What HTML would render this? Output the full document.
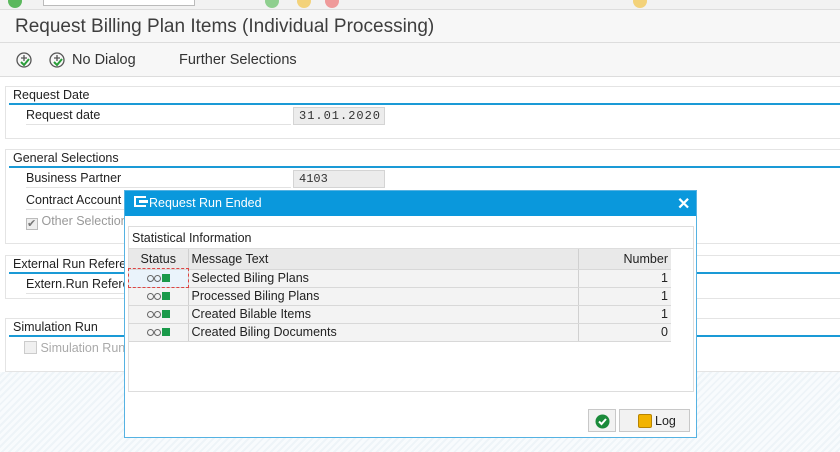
<!DOCTYPE html>
<html><head><meta charset="utf-8"><style>
*{margin:0;padding:0;box-sizing:border-box}
body{width:840px;height:452px;overflow:hidden;position:relative;font-family:"Liberation Sans",Arial,sans-serif;color:#222;background:repeating-linear-gradient(135deg,#eef4f8 0 2px,#f8fbfd 2px 5px)}
.abs{position:absolute}
.top{left:0;top:0;width:840px;height:10px;background:#f2f2f2;border-bottom:1px solid #ddd}
.title{left:0;top:10px;width:840px;height:33px;background:#f7f7f7;border-bottom:1px solid #ddd;font-size:19px;color:#3e3e3e;padding:6px 0 0 15px}
.tb{left:0;top:43px;width:840px;height:34px;background:#f7f7f7;border-bottom:1px solid #ddd;font-size:14.5px;color:#333}
.main{left:0;top:77px;width:840px;height:295px;background:#fff}
.sec{left:5px;width:840px;border:1px solid #e4e4e4;border-right:none;background:#fff}
.sh{position:absolute;left:7px;font-size:12.5px;color:#222}
.sl{position:absolute;left:3px;right:0;height:2px;background:#1a9ad6}
.lbl{position:absolute;left:20px;font-size:12.5px;color:#222;width:265px;height:18px;border-bottom:1px solid #e2e2e2;padding-top:1px}
.inp{position:absolute;left:287px;width:92px;height:18px;background:#ececec;border:1px solid #d4d4d4;font-family:"Liberation Mono",monospace;font-size:12px;padding:1px 0 0 5px;color:#333}
.dlg{left:124px;top:190px;width:573px;height:248px;background:#fff;border:1px solid #55b2e2}
.dt{left:0;top:0;width:571px;height:25px;background:#0a98dc;color:#fff;font-size:12.5px}
table{border-collapse:collapse;font-size:12.5px}
td{height:18px;border-bottom:1px solid #d8d8d8;padding:0 3px}
.c{display:inline-block;width:7px;height:7px;border:1.5px solid #666;border-radius:50%;margin-right:0}
.g{display:inline-block;width:8px;height:8px;background:#1a9a4a;margin-left:1px}
</style></head><body>
<div class="abs top">
<div class="abs" style="left:8px;top:-6px;width:14px;height:14px;border-radius:7px;background:#5bb85d"></div>
<div class="abs" style="left:43px;top:-2px;width:152px;height:8px;border:1px solid #bbb;background:#fff"></div>
<div class="abs" style="left:265px;top:-6px;width:14px;height:14px;border-radius:7px;background:#8fcf8f"></div>
<div class="abs" style="left:297px;top:-6px;width:14px;height:14px;border-radius:7px;background:#f3d27a"></div>
<div class="abs" style="left:325px;top:-6px;width:14px;height:14px;border-radius:7px;background:#ef9a9a"></div>
<div class="abs" style="left:633px;top:-6px;width:14px;height:14px;border-radius:7px;background:#f3d27a"></div>
</div>
<div class="abs title">Request Billing Plan Items (Individual Processing)</div>
<div class="abs tb">
<svg class="abs" style="left:15px;top:8px" width="18" height="18" viewBox="0 0 18 18"><circle cx="9" cy="9" r="7" fill="none" stroke="#555" stroke-width="1.3"/><path d="M9 4v6M6 7h6" stroke="#555" stroke-width="1.3"/><path d="M6 11l3 3 5-6" stroke="#2a9d3a" stroke-width="2" fill="none"/></svg>
<svg class="abs" style="left:48px;top:8px" width="18" height="18" viewBox="0 0 18 18"><circle cx="9" cy="9" r="7" fill="none" stroke="#555" stroke-width="1.3"/><path d="M9 4v6M6 7h6" stroke="#555" stroke-width="1.3"/><path d="M6 11l3 3 5-6" stroke="#2a9d3a" stroke-width="2" fill="none"/></svg>
<span class="abs" style="left:72px;top:9px">No Dialog</span>
<span class="abs" style="left:179px;top:9px">Further Selections</span>
</div>
<div class="abs main"></div>
<div class="abs sec" style="top:86px;height:53px"><div class="sh" style="top:1px">Request Date</div><div class="sl" style="top:16px"></div>
<div class="lbl" style="top:20px">Request date</div><div class="inp" style="top:20px;letter-spacing:1px">31.01.2020</div></div>
<div class="abs sec" style="top:149px;height:95px"><div class="sh" style="top:1px">General Selections</div><div class="sl" style="top:16px"></div>
<div class="lbl" style="top:20px">Business Partner</div><div class="inp" style="top:20px">4103</div>
<div class="lbl" style="top:42px">Contract Account</div>
<div class="abs" style="left:20px;top:64px;font-size:12.5px;color:#999"><span style="display:inline-block;width:12px;height:12px;border:1px solid #bbb;background:#eee;font-size:11px;line-height:10px;color:#777;vertical-align:-2px">✔</span> Other Selections</div></div>
<div class="abs sec" style="top:255px;height:44px"><div class="sh" style="top:1px">External Run Reference</div><div class="sl" style="top:16px"></div>
<div class="lbl" style="top:20px">Extern.Run Reference</div></div>
<div class="abs sec" style="top:318px;height:54px"><div class="sh" style="top:1px">Simulation Run</div><div class="sl" style="top:16px"></div>
<div class="abs" style="left:18px;top:22px;font-size:12.5px;color:#aaa"><span style="display:inline-block;width:13px;height:13px;border:1px solid #ccc;background:#f0f0f0;vertical-align:-2px"></span> Simulation Run</div></div>

<div class="abs dlg">
<div class="abs dt"><span class="abs" style="left:9px;top:5px;width:12px;height:11px;border:2px solid #fff;border-right:none"></span><span class="abs" style="left:14px;top:9px;width:9px;height:3px;background:#fff"></span><span class="abs" style="left:24px;top:5px">Request Run Ended</span><span class="abs" style="left:552px;top:3px;font-size:16px;font-weight:bold">✕</span></div>
<div class="abs" style="left:3px;top:35px;width:566px;height:166px;border:1px solid #ddd;background:#fff">
<div class="abs" style="left:0;top:0;width:564px;height:22px;border-bottom:1px solid #ddd;font-size:12.5px;padding:4px 0 0 3px">Statistical Information</div>
<table class="abs" style="left:0;top:22px;width:542px">
<tr style="background:#e9e9e9"><td style="width:59px;text-align:center;height:20px">Status</td><td style="width:390px;border-left:1px solid #d0d0d0">Message Text</td><td style="text-align:right;border-left:1px solid #d0d0d0">Number</td></tr>
<tr style="background:#f3f3f3"><td style="text-align:center;background:#eaf3fb;outline:1px dashed #d44"><span class="c"></span><span class="c"></span><span class="g"></span></td><td style="border-left:1px solid #d0d0d0">Selected Biling Plans</td><td style="text-align:right;border-left:1px solid #d0d0d0">1</td></tr>
<tr style="background:#f3f3f3"><td style="text-align:center"><span class="c"></span><span class="c"></span><span class="g"></span></td><td style="border-left:1px solid #d0d0d0">Processed Biling Plans</td><td style="text-align:right;border-left:1px solid #d0d0d0">1</td></tr>
<tr style="background:#f3f3f3"><td style="text-align:center"><span class="c"></span><span class="c"></span><span class="g"></span></td><td style="border-left:1px solid #d0d0d0">Created Bilable Items</td><td style="text-align:right;border-left:1px solid #d0d0d0">1</td></tr>
<tr style="background:#f3f3f3"><td style="text-align:center"><span class="c"></span><span class="c"></span><span class="g"></span></td><td style="border-left:1px solid #d0d0d0">Created Biling Documents</td><td style="text-align:right;border-left:1px solid #d0d0d0">0</td></tr>
</table></div>
<div class="abs" style="left:463px;top:218px;width:28px;height:23px;border:1px solid #c8c8c8;background:#f2f2f2"><svg class="abs" style="left:6px;top:4px" width="15" height="15" viewBox="0 0 15 15"><circle cx="7.5" cy="7.5" r="7" fill="#1a8a3a"/><path d="M4 7.5l2.5 2.5 4.5-5" stroke="#fff" stroke-width="2" fill="none"/></svg></div>
<div class="abs" style="left:494px;top:218px;width:71px;height:23px;border:1px solid #c8c8c8;background:#f2f2f2;font-size:12.5px"><span class="abs" style="left:18px;top:4px;width:14px;height:14px;background:#f2b300;border:1px solid #b88400;border-radius:2px"></span><span class="abs" style="left:35px;top:4px">Log</span></div>
</div>
</body></html>
